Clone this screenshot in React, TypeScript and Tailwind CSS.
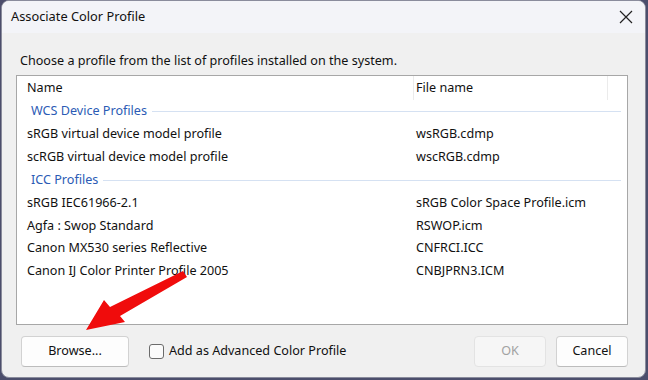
import React from "react";

const font = { fontFamily: '"Noto Sans", "Open Sans", sans-serif' };

function GroupRow({ label, tall }: { label: string; tall?: boolean }) {
  return (
    <div className={`flex items-center pl-[14px] pr-[6px] ${tall ? "h-[24px]" : "h-[23px]"}`}>
      <span className="text-[#2b5bb5] text-[12.6px] leading-none">{label}</span>
      <div className="ml-[5px] h-px flex-1 bg-[#d5e1f2]" />
    </div>
  );
}

function ProfileRow({ name, file }: { name: string; file: string }) {
  return (
    <div className="flex h-[22.6px] items-center text-[12.6px] leading-none text-[#111]">
      <span className="w-[399px] pl-[10px]">{name}</span>
      <span>{file}</span>
    </div>
  );
}

export default function App() {
  return (
    <div className="w-[648px] h-[380px] bg-[#4c4e6c] pl-px pr-[2px] pb-[2px]" style={font}>
      <div className="relative flex h-full flex-col overflow-hidden rounded-[8px] border border-[#8a8c9c] bg-[#f0f0f0]">
        {/* title bar */}
        <div className="flex h-[32px] shrink-0 items-center justify-between bg-[#f3f4f8] pl-[9px] pr-[12px]">
          <span className="text-[12.8px] text-[#111]">Associate Color Profile</span>
          <svg width="14" height="14" viewBox="0 0 14 14" className="text-[#222]">
            <path d="M1 1 L13 13 M13 1 L1 13" stroke="currentColor" strokeWidth="1.2" />
          </svg>
        </div>

        {/* body */}
        <div className="flex flex-1 flex-col pl-[14px] pr-[17px]">
          <div className="mt-[17px] h-[21px] pl-[4px] text-[12.6px] leading-[21px] text-[#111]">
            Choose a profile from the list of profiles installed on the system.
          </div>

          <div className="mt-[4px] h-[250px] border border-[#a7a7a7] bg-white">
            <div className="flex h-[24px] items-center text-[12.6px] text-[#111]">
              <span className="w-[396px] pl-[10px]">Name</span>
              <div className="h-full w-px bg-[#ebebeb]" />
              <span className="w-[193px] pl-[2px]">File name</span>
              <div className="h-full w-px bg-[#ebebeb]" />
            </div>
            <GroupRow label="WCS Device Profiles" />
            <ProfileRow name="sRGB virtual device model profile" file="wsRGB.cdmp" />
            <ProfileRow name="scRGB virtual device model profile" file="wscRGB.cdmp" />
            <GroupRow label="ICC Profiles" tall />
            <ProfileRow name="sRGB IEC61966-2.1" file="sRGB Color Space Profile.icm" />
            <ProfileRow name="Agfa : Swop Standard" file="RSWOP.icm" />
            <ProfileRow name="Canon MX530 series Reflective" file="CNFRCI.ICC" />
            <ProfileRow name="Canon IJ Color Printer Profile 2005" file="CNBJPRN3.ICM" />
          </div>

          <div className="mt-[11px] flex items-center pl-[5px]">
            <button className="h-[31px] w-[108px] rounded-[4px] border border-[#d2d2d2] border-b-[#bcbcbc] bg-[#fdfdfd] text-[12.6px] text-[#111]">
              Browse...
            </button>
            <label className="ml-[20px] flex items-center gap-[5px] text-[12.6px] text-[#111]">
              <span className="h-[15px] w-[15px] rounded-[3px] border border-[#6b6b6b] bg-[#fbfbfb]" />
              Add as Advanced Color Profile
            </label>
            <div className="ml-auto flex gap-[10px]">
              <button className="h-[31px] w-[72px] rounded-[4px] border border-[#e3e3e3] bg-[#f6f6f6] text-[12.6px] text-[#a2a2a2]">
                OK
              </button>
              <button className="h-[31px] w-[72px] rounded-[4px] border border-[#d2d2d2] border-b-[#bcbcbc] bg-[#fdfdfd] text-[12.6px] text-[#111]">
                Cancel
              </button>
            </div>
          </div>
        </div>

        {/* annotation arrow */}
        <svg className="absolute left-0 top-0" width="648" height="380" viewBox="0 0 648 380">
          <polygon
            points="181,270 185,276 118,315 123,321 84,329 102,299 108,306"
            fill="#f00c0c"
          />
        </svg>
      </div>
    </div>
  );
}
